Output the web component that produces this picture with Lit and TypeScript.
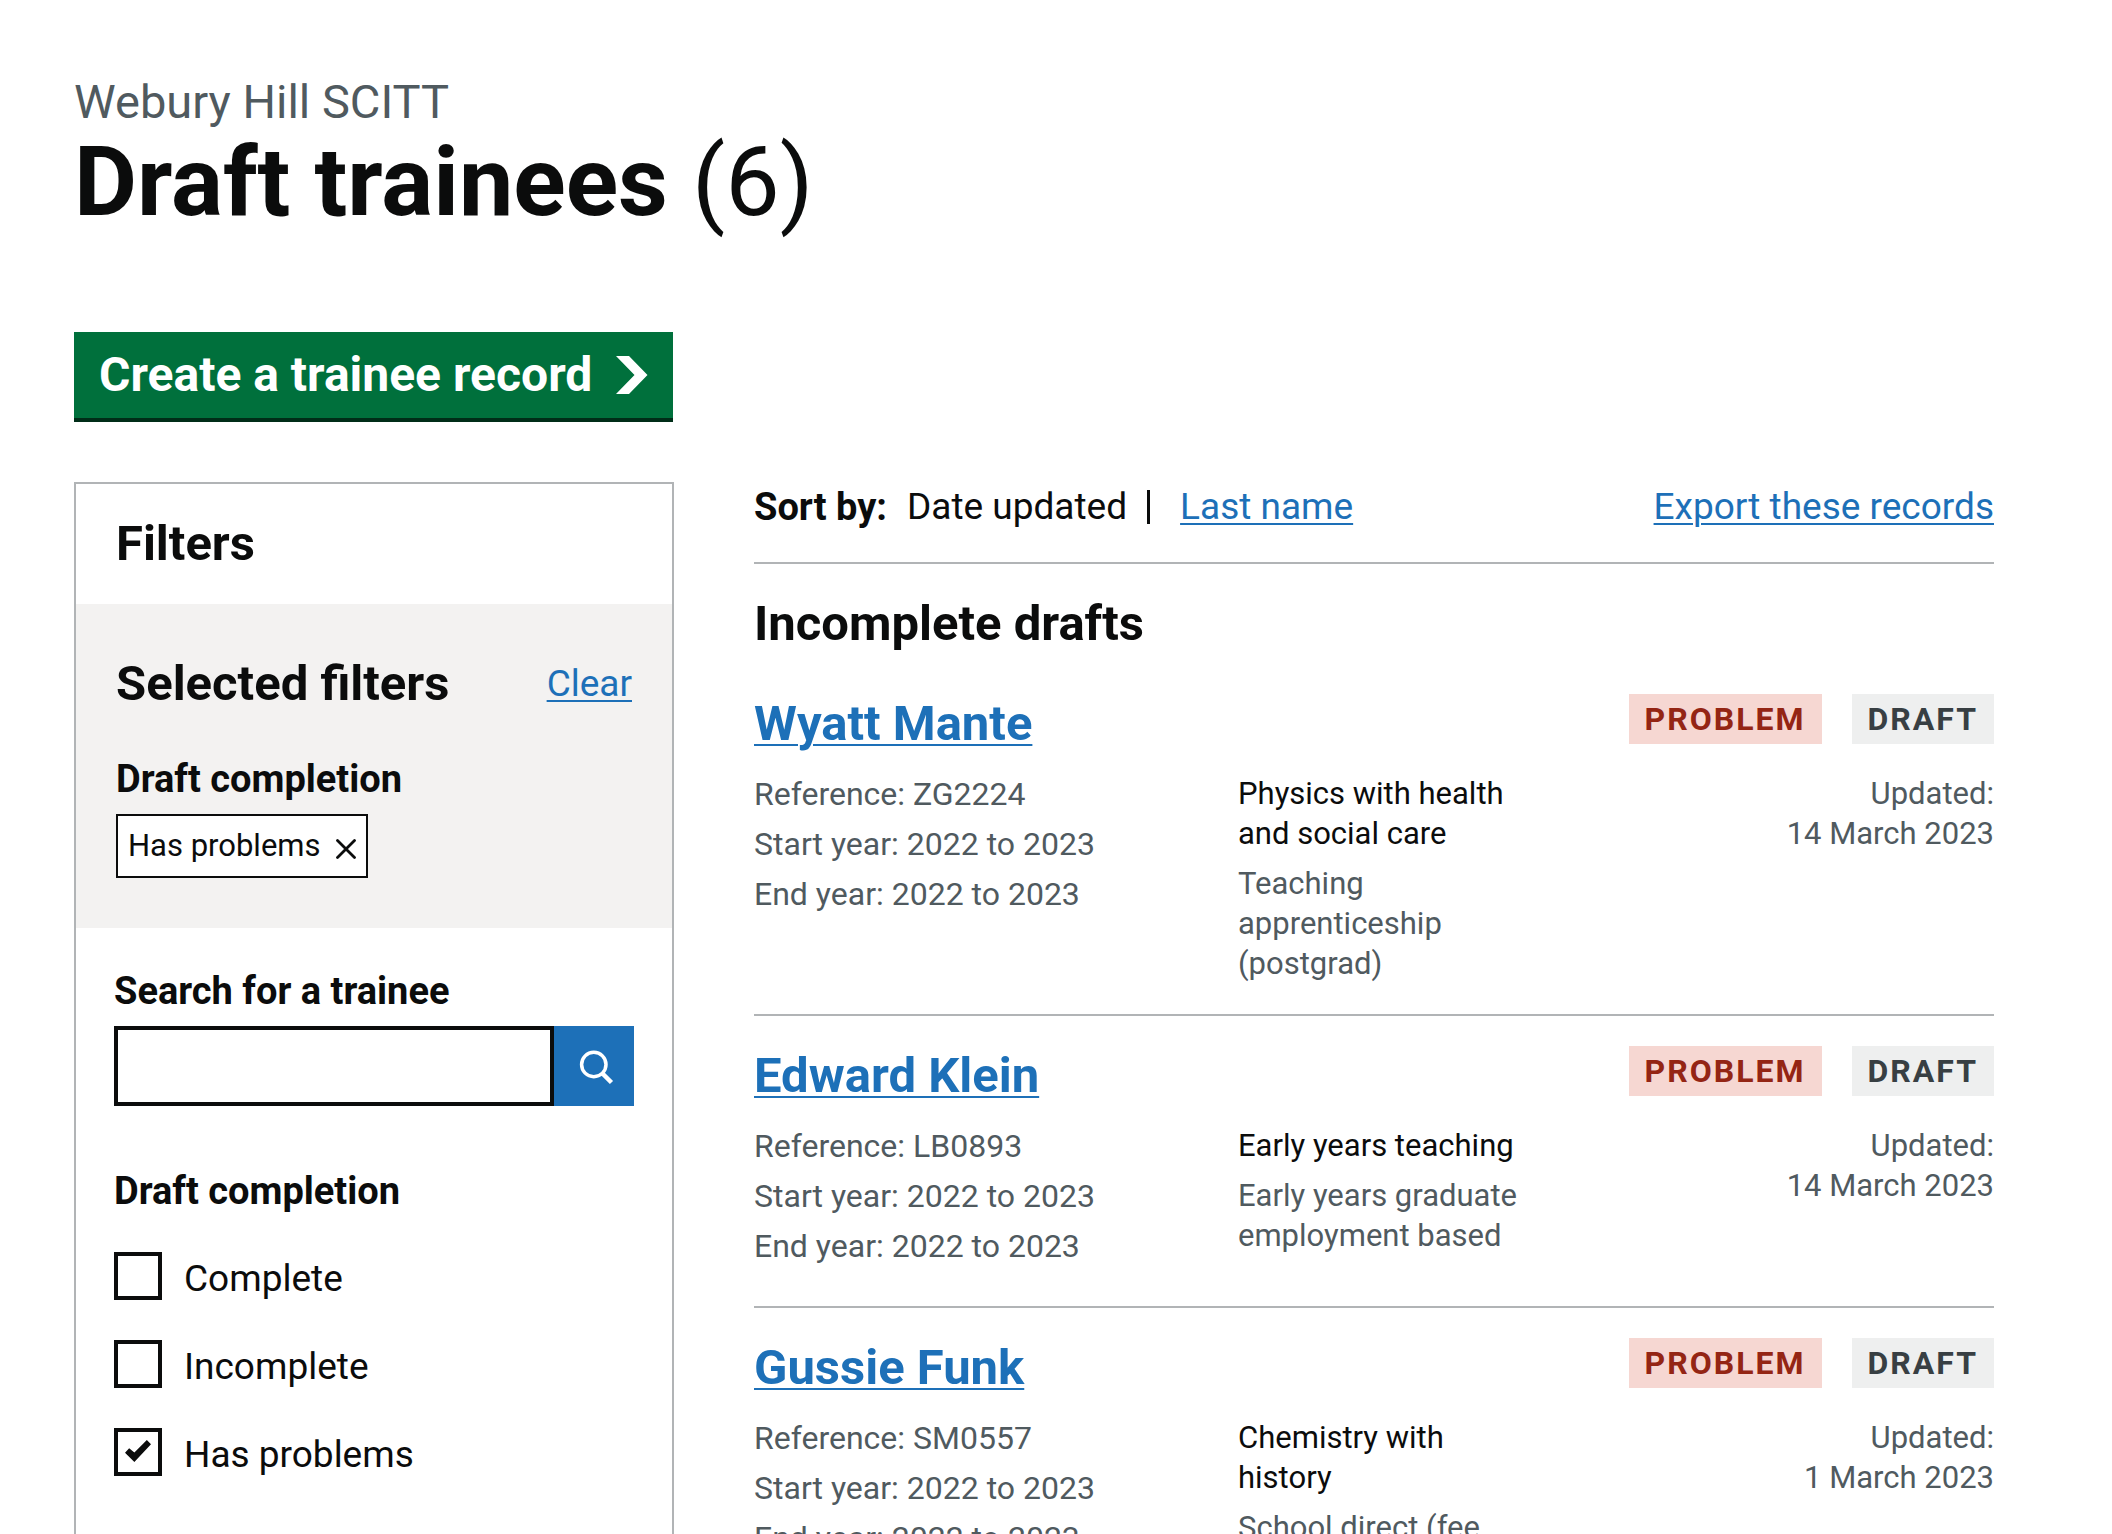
import { LitElement, html, css } from "lit";
import { customElement, property } from "lit/decorators.js";

interface Trainee {
  name: string;
  reference: string;
  startYear: string;
  endYear: string;
  subject: string;
  route: string;
  updated: string;
}

const TRAINEES: Trainee[] = [
  {
    name: "Wyatt Mante",
    reference: "ZG2224",
    startYear: "2022 to 2023",
    endYear: "2022 to 2023",
    subject: "Physics with health and social care",
    route: "Teaching apprenticeship (postgrad)",
    updated: "14 March 2023",
  },
  {
    name: "Edward Klein",
    reference: "LB0893",
    startYear: "2022 to 2023",
    endYear: "2022 to 2023",
    subject: "Early years teaching",
    route: "Early years graduate employment based",
    updated: "14 March 2023",
  },
  {
    name: "Gussie Funk",
    reference: "SM0557",
    startYear: "2022 to 2023",
    endYear: "2022 to 2023",
    subject: "Chemistry with history",
    route: "School direct (fee funded)",
    updated: "1 March 2023",
  },
];

const COMPLETION = [
  { id: "complete", label: "Complete", checked: false },
  { id: "incomplete", label: "Incomplete", checked: false },
  { id: "has-problems", label: "Has problems", checked: true },
];

const base = css`
  :host {
    display: block;
    color: #0b0c0c;
    font-family: Roboto, "Liberation Sans", sans-serif;
    font-size: 37px;
    line-height: 50px;
  }
  *,
  *::before,
  *::after {
    box-sizing: border-box;
  }
  h1,
  h2,
  h3,
  p,
  ul,
  legend,
  fieldset {
    margin: 0;
    padding: 0;
    border: 0;
  }
  ul {
    list-style: none;
  }
  a {
    color: #1d70b8;
    text-decoration: underline;
    text-decoration-thickness: 2px;
    text-underline-offset: 4px;
  }
  .heading-m {
    font-size: 49px;
    font-weight: 700;
    line-height: 60px;
  }
  .heading-s {
    font-size: 38px;
    font-weight: 700;
    line-height: 50px;
  }
`;

@customElement("trainee-filters")
export class TraineeFilters extends LitElement {
  static styles = [
    base,
    css`
      .panel {
        height: 100%;
        border: 2px solid #b1b4b6;
      }
      .header {
        padding: 30px 40px;
      }
      .selected {
        padding: 50px 40px;
        background: #f3f2f1;
      }
      .selected-header {
        display: flex;
        justify-content: space-between;
        align-items: center;
        margin-bottom: 40px;
      }
      .tag {
        display: inline-flex;
        align-items: center;
        gap: 15px;
        margin-top: 10px;
        padding: 10px;
        border: 2px solid #0b0c0c;
        background: #ffffff;
        color: #0b0c0c;
        font-size: 31px;
        line-height: 40px;
        text-decoration: none;
      }
      .options {
        padding: 38px;
      }
      .search-label {
        display: block;
        margin-bottom: 10px;
      }
      .search {
        display: flex;
        margin-bottom: 60px;
      }
      .search-input {
        flex: 1;
        min-width: 0;
        height: 80px;
        padding: 10px;
        border: 4px solid #0b0c0c;
        border-radius: 0;
        background: #ffffff;
        font: inherit;
      }
      .search-button {
        display: flex;
        align-items: center;
        justify-content: center;
        width: 80px;
        height: 80px;
        padding: 0;
        border: 0;
        background: #1d70b8;
      }
      .boxes {
        display: grid;
        gap: 36px;
        margin-top: 36px;
      }
      .box {
        display: flex;
        gap: 22px;
      }
      .box-input {
        appearance: none;
        display: grid;
        place-content: center;
        width: 48px;
        height: 48px;
        margin: 0;
        border: 4px solid #0b0c0c;
        background: #ffffff;
      }
      .box-input:checked::before {
        content: "";
        width: 26px;
        height: 22px;
        margin-bottom: 2px;
        background: #0b0c0c;
        clip-path: polygon(0 58%, 16% 37%, 36% 57%, 84% 0, 100% 19%, 36% 100%);
      }
      .box-label {
        padding-top: 2px;
      }
    `,
  ];

  render() {
    return html`
      <div class="panel">
        <div class="header"><h2 class="heading-m">Filters</h2></div>
        <div class="selected">
          <div class="selected-header">
            <h2 class="heading-m">Selected filters</h2>
            <a href="#clear">Clear</a>
          </div>
          <h3 class="heading-s">Draft completion</h3>
          <a class="tag" href="#remove-has-problems">
            Has problems
            <svg width="20" height="26" viewBox="0 0 20 26" aria-hidden="true">
              <path d="M1.500 7.500l17 17M18.500 7.500l-17 17" fill="none" stroke="#0b0c0c" stroke-width="2.800" stroke-linecap="round" />
            </svg>
          </a>
        </div>
        <form class="options" @submit=${(e: Event) => e.preventDefault()}>
          <label class="heading-s search-label" for="search">Search for a trainee</label>
          <div class="search">
            <input class="search-input" id="search" type="search" />
            <button class="search-button" type="submit" aria-label="Search">
              <svg width="40" height="40" viewBox="0 0 40 40" fill="none" stroke="#ffffff" aria-hidden="true">
                <circle cx="19.800" cy="18.500" r="12.200" stroke-width="3.500" />
                <path d="M28 27l9.500 9.500" stroke-width="4.500" />
              </svg>
            </button>
          </div>
          <fieldset>
            <legend class="heading-s">Draft completion</legend>
            <div class="boxes">
              ${COMPLETION.map(
                (c) => html`
                  <div class="box">
                    <input class="box-input" type="checkbox" id=${c.id} .checked=${c.checked} />
                    <label class="box-label" for=${c.id}>${c.label}</label>
                  </div>
                `,
              )}
            </div>
          </fieldset>
        </form>
      </div>
    `;
  }
}

@customElement("trainee-record")
export class TraineeRecord extends LitElement {
  @property({ attribute: false }) trainee!: Trainee;

  static styles = [
    base,
    css`
      :host {
        font-size: 31px;
        line-height: 40px;
      }
      .top {
        display: flex;
        justify-content: space-between;
        align-items: flex-start;
        margin-bottom: 20px;
      }
      .tags {
        display: flex;
        gap: 30px;
      }
      .tag {
        padding: 5px 16px;
        font-size: 32px;
        font-weight: 700;
        letter-spacing: 2px;
        text-transform: uppercase;
      }
      .tag-problem {
        background: #f6d7d2;
        color: #942514;
      }
      .tag-draft {
        background: #eeefef;
        color: #383f43;
      }
      .details {
        display: grid;
        grid-template-columns: 484fr 296fr 460fr;
      }
      .meta {
        color: #505a5f;
        font-size: 32px;
      }
      .meta-item,
      .subject {
        margin-bottom: 10px;
      }
      .route {
        color: #505a5f;
      }
      .updated {
        color: #505a5f;
        text-align: right;
      }
    `,
  ];

  render() {
    const t = this.trainee;
    return html`
      <div class="top">
        <h3 class="heading-m"><a href="#${t.reference}">${t.name}</a></h3>
        <div class="tags">
          <strong class="tag tag-problem">Problem</strong>
          <strong class="tag tag-draft">Draft</strong>
        </div>
      </div>
      <div class="details">
        <ul class="meta">
          <li class="meta-item">Reference: ${t.reference}</li>
          <li class="meta-item">Start year: ${t.startYear}</li>
          <li class="meta-item">End year: ${t.endYear}</li>
        </ul>
        <div>
          <p class="subject">${t.subject}</p>
          <p class="route">${t.route}</p>
        </div>
        <p class="updated">Updated:<br />${t.updated}</p>
      </div>
    `;
  }
}

@customElement("app-root")
export class AppRoot extends LitElement {
  static styles = [
    base,
    css`
      .page {
        padding: 72px 118px 0 74px;
        background: #ffffff;
      }
      .caption {
        color: #505a5f;
        font-size: 47px;
        line-height: 60px;
      }
      .title {
        margin-bottom: 100px;
        font-size: 97px;
        font-weight: 700;
        line-height: 100px;
      }
      .count {
        font-weight: 400;
      }
      .start {
        display: inline-flex;
        align-items: center;
        gap: 24px;
        padding: 18px 25px;
        border-bottom: 4px solid #002d18;
        background: #00703c;
        color: #ffffff;
        font-size: 48px;
        font-weight: 700;
        line-height: 50px;
        text-decoration: none;
      }
      .columns {
        display: grid;
        grid-template-columns: minmax(0, 600fr) minmax(0, 1240fr);
        gap: 80px;
        margin-top: 60px;
      }
      .bar {
        display: flex;
        justify-content: space-between;
        padding-bottom: 30px;
        border-bottom: 2px solid #b1b4b6;
      }
      .sort {
        display: flex;
        align-items: center;
        gap: 20px;
      }
      .divider {
        width: 3px;
        height: 34px;
        margin-right: 10px;
        background: #0b0c0c;
      }
      .section-title {
        margin: 30px 0 40px;
      }
      .record {
        padding-bottom: 30px;
      }
      .record + .record {
        padding-top: 30px;
        border-top: 2px solid #b1b4b6;
      }
    `,
  ];

  render() {
    return html`
      <main class="page">
        <p class="caption">Webury Hill SCITT</p>
        <h1 class="title">Draft trainees <span class="count">(6)</span></h1>
        <a class="start" href="#create">
          Create a trainee record
          <svg width="32" height="38" viewBox="0 0 32 38" aria-hidden="true">
            <path d="M0 0h13l18.500 19L13 38H0l18.500-19z" fill="#ffffff" />
          </svg>
        </a>
        <div class="columns">
          <trainee-filters></trainee-filters>
          <section>
            <div class="bar">
              <div class="sort">
                <strong class="heading-s">Sort by:</strong>
                <span>Date updated</span>
                <span class="divider"></span>
                <a href="#last-name">Last name</a>
              </div>
              <a href="#export">Export these records</a>
            </div>
            <h2 class="heading-m section-title">Incomplete drafts</h2>
            ${TRAINEES.map((t) => html`<trainee-record class="record" .trainee=${t}></trainee-record>`)}
          </section>
        </div>
      </main>
    `;
  }
}
